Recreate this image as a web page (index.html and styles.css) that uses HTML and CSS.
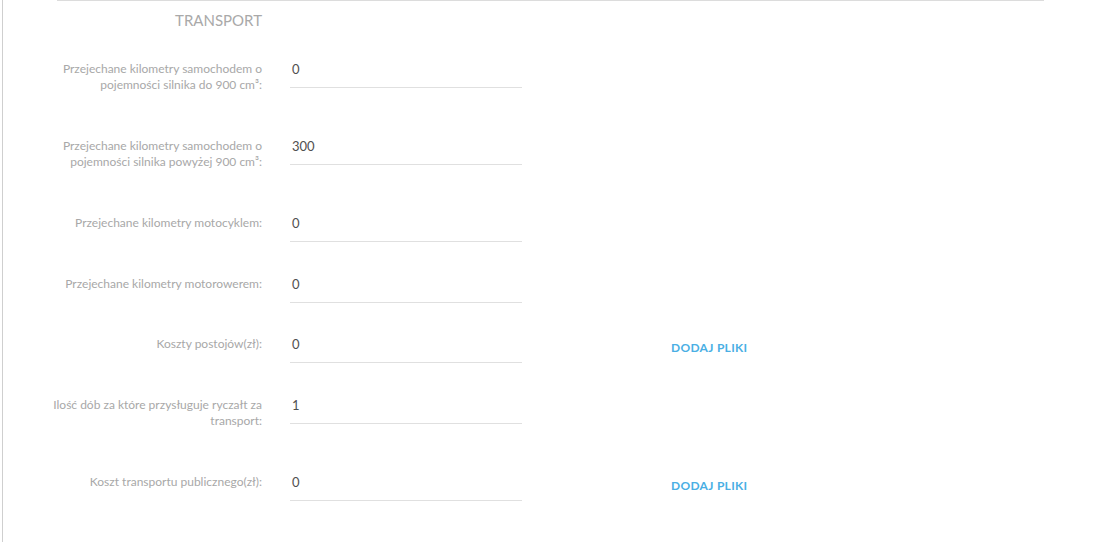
FILE: index.html
```html
<!DOCTYPE html>
<html lang="pl">
<head>
<meta charset="utf-8">
<link rel="stylesheet" href="styles.css">
</head>
<body>
<div class="page">
  <section class="section">
    <div class="row title-row">
      <h2 class="label title">TRANSPORT</h2>
    </div>
    <div class="row">
      <label class="label">Przejechane kilometry samochodem o pojemności silnika do 900 cm³:</label>
      <div class="field">0</div>
    </div>
    <div class="row">
      <label class="label">Przejechane kilometry samochodem o pojemności silnika powyżej 900 cm³:</label>
      <div class="field">300</div>
    </div>
    <div class="row">
      <label class="label">Przejechane kilometry motocyklem:</label>
      <div class="field">0</div>
    </div>
    <div class="row">
      <label class="label">Przejechane kilometry motorowerem:</label>
      <div class="field">0</div>
    </div>
    <div class="row">
      <label class="label">Koszty postojów(zł):</label>
      <div class="field">0</div>
      <a class="files">DODAJ PLIKI</a>
    </div>
    <div class="row">
      <label class="label">Ilość dób za które przysługuje ryczałt za transport:</label>
      <div class="field">1</div>
    </div>
    <div class="row">
      <label class="label">Koszt transportu publicznego(zł):</label>
      <div class="field">0</div>
      <a class="files">DODAJ PLIKI</a>
    </div>
  </section>
</div>
</body>
</html>
```

FILE: styles.css
```css
html, body {
  margin: 0;
  padding: 0;
  background: #fff;
  font-family: Lato, "Open Sans", Arial, sans-serif;
}
.page {
  margin-left: 2px;
  border-left: 1px solid #cfcfcf;
  min-height: 542px;
  box-sizing: border-box;
  overflow: hidden;
}
.section {
  margin-left: 54px;
  width: 987px;
  border-top: 1px solid #dcdcdc;
}
.row {
  display: flex;
  align-items: flex-start;
  margin-bottom: 30.34px;
}
.title-row {
  margin-bottom: 0;
  height: 58px;
}
.label {
  display: block;
  margin-left: -10px;
  width: 215px;
  flex: none;
  text-align: right;
  font-size: 12px;
  line-height: 16.33px;
  color: #a8a8a8;
  padding: 2px 0 12px;
  box-sizing: content-box;
}
.title {
  margin-top: 0;
  font-size: 15px;
  font-weight: 400;
  color: #a9a9a9;
  line-height: 20px;
  padding: 9px 0 0;
  margin-bottom: 0;
}
.field {
  margin-left: 28px;
  width: 232px;
  flex: none;
  box-sizing: border-box;
  font-size: 13px;
  line-height: 20px;
  color: #505050;
  padding: 0 2px 8px;
  border-bottom: 1px solid #e0e0e0;
}
.files {
  margin-left: 149px;
  margin-top: 4px;
  font-size: 12px;
  line-height: 20px;
  font-weight: 700;
  letter-spacing: 0.3px;
  color: #4aafe4;
  cursor: pointer;
}
```
